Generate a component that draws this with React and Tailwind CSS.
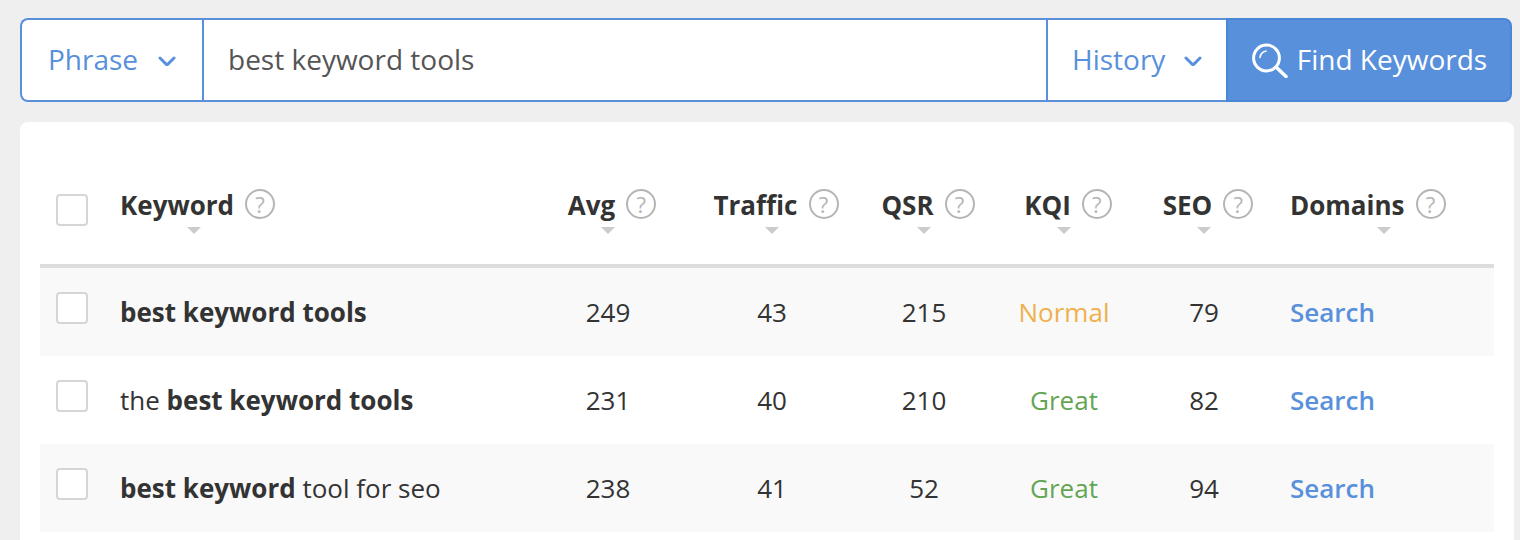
import { useState } from 'react';

const columns = [
  { label: 'Avg', width: 'w-[164px]' },
  { label: 'Traffic', width: 'w-[164px]' },
  { label: 'QSR', width: 'w-[140px]' },
  { label: 'KQI', width: 'w-[140px]' },
  { label: 'SEO', width: 'w-[140px]' },
];

const rows = [
  {
    id: 1,
    name: 'best keyword tools',
    keyword: <b>best keyword tools</b>,
    avg: 249,
    traffic: 43,
    qsr: 215,
    kqi: 'Normal',
    seo: 79,
  },
  {
    id: 2,
    name: 'the best keyword tools',
    keyword: <>the <b>best keyword tools</b></>,
    avg: 231,
    traffic: 40,
    qsr: 210,
    kqi: 'Great',
    seo: 82,
  },
  {
    id: 3,
    name: 'best keyword tool for seo',
    keyword: <><b>best keyword</b> tool for seo</>,
    avg: 238,
    traffic: 41,
    qsr: 52,
    kqi: 'Great',
    seo: 94,
  },
];

const kqiColors = {
  Normal: 'text-[#efb04e]',
  Great: 'text-[#62a654]',
};

function Dropdown({ label, options, className, selectClassName, arrowClassName }) {
  return (
    <div className={`relative border-[#5890db] ${className}`}>
      <select
        aria-label={label}
        className={`h-full w-full appearance-none bg-transparent pb-0.5 text-[28px] text-[#5890db] outline-none ${selectClassName}`}
      >
        {options.map(option => (
          <option key={option}>{option}</option>
        ))}
      </select>
      <svg
        viewBox="0 0 18 12"
        className={`pointer-events-none absolute inset-y-0 my-auto h-3 w-[18px] ${arrowClassName}`}
        fill="none"
        stroke="#5890db"
        strokeWidth="3"
        strokeLinecap="round"
        strokeLinejoin="round"
      >
        <path d="M2 4l7 7L16 4" />
      </svg>
    </div>
  );
}

function SearchIcon() {
  return (
    <svg viewBox="0 -2 38 38" className="h-[38px] w-[38px]" fill="none" stroke="white" strokeLinecap="round">
      <circle cx="15.5" cy="16" r="12.9" strokeWidth="3" />
      <path d="M25.5 25.5l9.5 9" strokeWidth="3.5" />
      <path d="M9 15.5c.4-3.3 2.6-5.7 6-6.5" strokeWidth="1.6" />
    </svg>
  );
}

function Checkbox({ label }) {
  return (
    <input
      type="checkbox"
      aria-label={label}
      className="block h-8 w-8 appearance-none rounded border-2 border-[#d6d6d6] bg-white checked:bg-[#5890db]"
    />
  );
}

function HeaderLabel({ children }) {
  return (
    <span className="-mr-2 inline-flex items-start gap-[11px] pb-1.5 align-top">
      {children}
      <button
        type="button"
        aria-label={`About ${children}`}
        className="flex h-[30px] w-[30px] items-center justify-center rounded-full border-2 border-[#b5b5b5] text-[22px] font-normal text-[#b5b5b5]"
      >
        ?
      </button>
    </span>
  );
}

function SortArrow() {
  return (
    <svg viewBox="0 0 14 7" className="mx-auto h-[7px] w-[14px]" fill="#cccccc">
      <path d="M0 0h14L7 7z" />
    </svg>
  );
}

export default function App() {
  const [query, setQuery] = useState('best keyword tools');

  return (
    <div className="flex min-h-screen flex-col bg-[#efefef] pt-[18px] pl-5 font-['Open_Sans',sans-serif] text-[26px] text-[#333333]">
      <form className="mr-2 flex h-[84px]" onSubmit={e => e.preventDefault()}>
        <div className="flex flex-1 rounded-l-lg border-2 border-r-0 border-[#5890db] bg-white">
          <Dropdown
            label="Match type"
            options={['Phrase', 'Exact']}
            className="w-[182px] border-r-2"
            selectClassName="pl-[26px]"
            arrowClassName="right-[26px]"
          />
          <input
            type="text"
            aria-label="Keyword"
            value={query}
            onChange={e => setQuery(e.target.value)}
            className="min-w-0 flex-1 px-6 pb-0.5 text-[28px] text-[#555555] outline-none"
          />
          <Dropdown
            label="History"
            options={['History']}
            className="w-[180px] border-l-2"
            selectClassName="pl-6"
            arrowClassName="right-6"
          />
        </div>
        <button
          type="submit"
          className="flex w-[286px] items-center justify-center gap-2 rounded-r-lg border-2 border-[#4a86d8] bg-[#5890db] pb-0.5 text-[28px] text-white"
        >
          <SearchIcon />
          Find Keywords
        </button>
      </form>

      <main className="mt-5 mr-[6px] flex-1 rounded-t-lg bg-white px-5 pt-5">
        <table className="w-full table-fixed border-collapse">
          <thead className="leading-8">
            <tr className="h-[122px]">
              <th className="w-16 pt-3.5 pl-4">
                <Checkbox label="Select all keywords" />
              </th>
              <th className="pt-4 pl-4 text-left">
                <div className="inline-block align-top">
                  <HeaderLabel>Keyword</HeaderLabel>
                  <SortArrow />
                </div>
              </th>
              {columns.map(col => (
                <th key={col.label} className={`pt-4 ${col.width}`}>
                  <HeaderLabel>{col.label}</HeaderLabel>
                  <SortArrow />
                </th>
              ))}
              <th className="w-[220px] pt-4 text-left">
                <div className="pl-4">
                  <HeaderLabel>Domains</HeaderLabel>
                </div>
                <SortArrow />
              </th>
            </tr>
          </thead>
          <tbody>
            <tr className="h-1 bg-[#dddddd]">
              <td colSpan={8} className="p-0" />
            </tr>
            {rows.map(row => (
              <tr key={row.id} className="h-[88px] text-center even:bg-[#f9f9f9]">
                <td className="pb-2 pl-4">
                  <Checkbox label={`Select ${row.name}`} />
                </td>
                <td className="pl-4 text-left">{row.keyword}</td>
                <td>{row.avg}</td>
                <td>{row.traffic}</td>
                <td>{row.qsr}</td>
                <td className={kqiColors[row.kqi]}>{row.kqi}</td>
                <td>{row.seo}</td>
                <td className="pl-4 text-left">
                  <a href="#search" className="font-semibold text-[#5890db]">Search</a>
                </td>
              </tr>
            ))}
          </tbody>
        </table>
      </main>
    </div>
  );
}
